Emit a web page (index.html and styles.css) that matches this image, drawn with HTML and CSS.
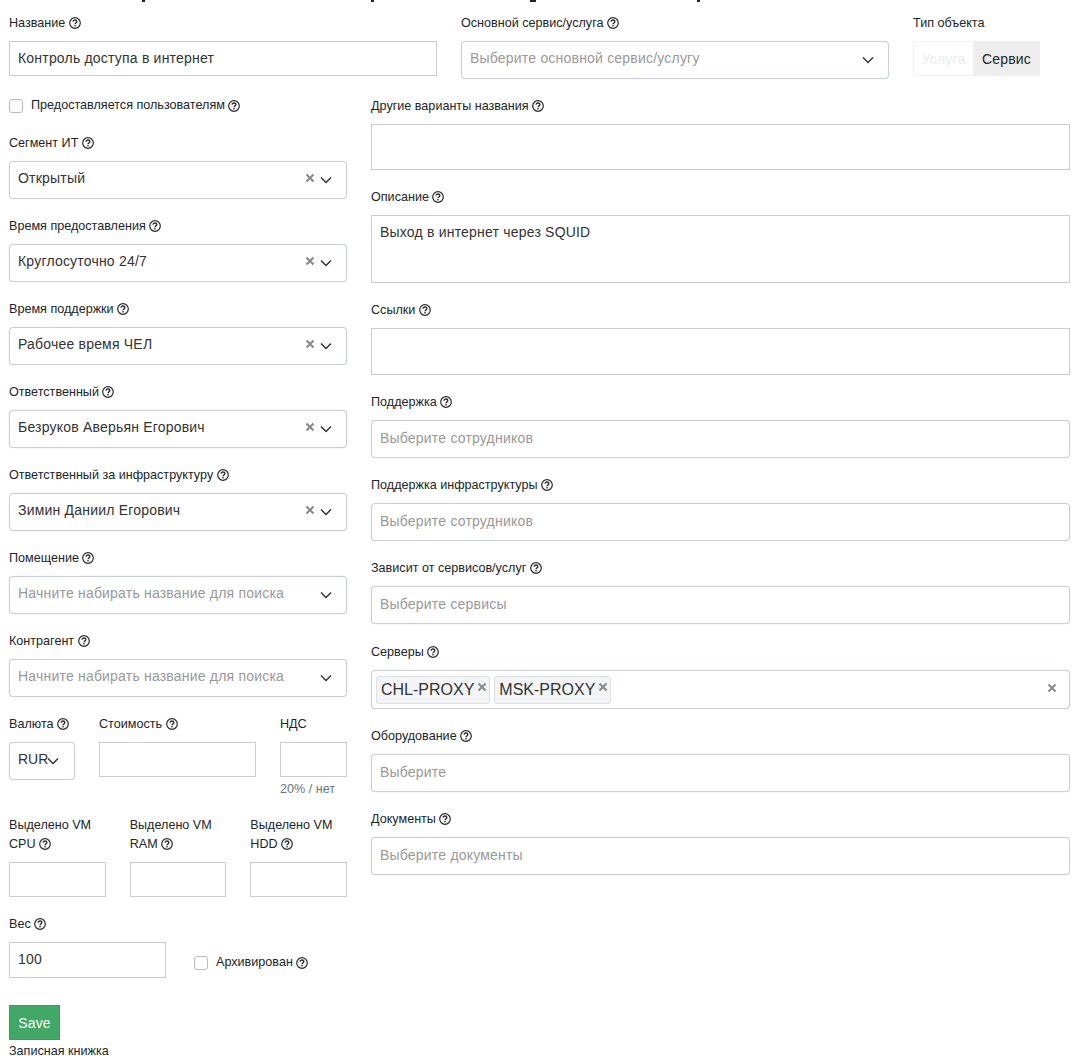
FILE: index.html
```html
<!DOCTYPE html>
<html lang="ru">
<head>
<meta charset="utf-8">
<title>Контроль доступа в интернет</title>
<link rel="stylesheet" href="styles.css">
</head>
<body>
<svg class="sprite" width="0" height="0" aria-hidden="true">
  <symbol id="help" viewBox="0 0 12 12">
    <circle cx="6" cy="6" r="5.3" fill="none" stroke="currentColor" stroke-width="1.2"/>
    <path d="M4.1 4.7c0-1 .8-1.7 1.9-1.7s1.9.7 1.9 1.6c0 1.3-1.9 1.3-1.9 2.6" fill="none" stroke="currentColor" stroke-width="1.3"/>
    <rect x="5.3" y="8" width="1.4" height="1.4" fill="currentColor"/>
  </symbol>
  <symbol id="chev" viewBox="0 0 12 8">
    <path d="M1 1.5l5 5 5-5" fill="none" stroke="currentColor" stroke-width="1.5"/>
  </symbol>
  <symbol id="clear" viewBox="0 0 10 10">
    <path d="M1.5 1.5l7 7M8.5 1.5l-7 7" fill="none" stroke="currentColor" stroke-width="2"/>
  </symbol>
</svg>

<form class="page">
  <div class="clipped-title"><i class="m1"></i><i class="m2"></i><i class="m3"></i><i class="m4"></i></div>

  <div class="top-row">
    <div>
      <label class="lbl">Название <svg class="q"><use href="#help"/></svg></label>
      <input class="inp" type="text" value="Контроль доступа в интернет">
    </div>
    <div>
      <label class="lbl">Основной сервис/услуга <svg class="q"><use href="#help"/></svg></label>
      <div class="sel"><span class="ph">Выберите основной сервис/услугу</span><svg class="chev"><use href="#chev"/></svg></div>
    </div>
    <div>
      <label class="lbl">Тип объекта</label>
      <div class="toggle"><span class="off">Услуга</span><span class="on">Сервис</span></div>
    </div>
  </div>

  <div class="columns">
    <div class="col-left">
      <label class="check check-top"><span class="box"></span>Предоставляется пользователям <svg class="q"><use href="#help"/></svg></label>

      <div class="field">
        <label class="lbl">Сегмент ИТ <svg class="q"><use href="#help"/></svg></label>
        <div class="sel"><span class="val">Открытый</span><svg class="clear"><use href="#clear"/></svg><svg class="chev"><use href="#chev"/></svg></div>
      </div>
      <div class="field">
        <label class="lbl">Время предоставления <svg class="q"><use href="#help"/></svg></label>
        <div class="sel"><span class="val">Круглосуточно 24/7</span><svg class="clear"><use href="#clear"/></svg><svg class="chev"><use href="#chev"/></svg></div>
      </div>
      <div class="field">
        <label class="lbl">Время поддержки <svg class="q"><use href="#help"/></svg></label>
        <div class="sel"><span class="val">Рабочее время ЧЕЛ</span><svg class="clear"><use href="#clear"/></svg><svg class="chev"><use href="#chev"/></svg></div>
      </div>
      <div class="field">
        <label class="lbl">Ответственный <svg class="q"><use href="#help"/></svg></label>
        <div class="sel"><span class="val">Безруков Аверьян Егорович</span><svg class="clear"><use href="#clear"/></svg><svg class="chev"><use href="#chev"/></svg></div>
      </div>
      <div class="field">
        <label class="lbl">Ответственный за инфраструктуру <svg class="q"><use href="#help"/></svg></label>
        <div class="sel"><span class="val">Зимин Даниил Егорович</span><svg class="clear"><use href="#clear"/></svg><svg class="chev"><use href="#chev"/></svg></div>
      </div>
      <div class="field">
        <label class="lbl">Помещение <svg class="q"><use href="#help"/></svg></label>
        <div class="sel"><span class="ph">Начните набирать название для поиска</span><svg class="chev"><use href="#chev"/></svg></div>
      </div>
      <div class="field">
        <label class="lbl">Контрагент <svg class="q"><use href="#help"/></svg></label>
        <div class="sel"><span class="ph">Начните набирать название для поиска</span><svg class="chev"><use href="#chev"/></svg></div>
      </div>

      <div class="field price-row">
        <div>
          <label class="lbl">Валюта <svg class="q"><use href="#help"/></svg></label>
          <div class="sel sel-currency"><span class="val">RUR</span><svg class="chev"><use href="#chev"/></svg></div>
        </div>
        <div>
          <label class="lbl">Стоимость <svg class="q"><use href="#help"/></svg></label>
          <input class="inp" type="text">
        </div>
        <div>
          <label class="lbl">НДС</label>
          <input class="inp" type="text">
          <div class="hint">20% / нет</div>
        </div>
      </div>

      <div class="vm-row">
        <div>
          <label class="lbl">Выделено VM CPU <svg class="q"><use href="#help"/></svg></label>
          <input class="inp" type="text">
        </div>
        <div>
          <label class="lbl">Выделено VM RAM <svg class="q"><use href="#help"/></svg></label>
          <input class="inp" type="text">
        </div>
        <div>
          <label class="lbl">Выделено VM HDD <svg class="q"><use href="#help"/></svg></label>
          <input class="inp" type="text">
        </div>
      </div>

      <div class="field weight-row">
        <div class="weight">
          <label class="lbl">Вес <svg class="q"><use href="#help"/></svg></label>
          <input class="inp inp-36" type="text" value="100">
        </div>
        <label class="check check-archive"><span class="box"></span>Архивирован <svg class="q"><use href="#help"/></svg></label>
      </div>
    </div>

    <div class="col-right">
      <div>
        <label class="lbl">Другие варианты названия <svg class="q"><use href="#help"/></svg></label>
        <textarea class="inp area-46"></textarea>
      </div>
      <div class="field">
        <label class="lbl">Описание <svg class="q"><use href="#help"/></svg></label>
        <textarea class="inp area-68">Выход в интернет через SQUID</textarea>
      </div>
      <div class="field">
        <label class="lbl">Ссылки <svg class="q"><use href="#help"/></svg></label>
        <textarea class="inp area-47"></textarea>
      </div>
      <div class="field">
        <label class="lbl">Поддержка <svg class="q"><use href="#help"/></svg></label>
        <div class="sel sel-plain"><span class="ph">Выберите сотрудников</span></div>
      </div>
      <div class="field">
        <label class="lbl">Поддержка инфраструктуры <svg class="q"><use href="#help"/></svg></label>
        <div class="sel sel-plain"><span class="ph">Выберите сотрудников</span></div>
      </div>
      <div class="field">
        <label class="lbl">Зависит от сервисов/услуг <svg class="q"><use href="#help"/></svg></label>
        <div class="sel sel-plain"><span class="ph">Выберите сервисы</span></div>
      </div>
      <div class="field field-servers">
        <label class="lbl">Серверы <svg class="q"><use href="#help"/></svg></label>
        <div class="sel sel-multi">
          <span class="tag">CHL-PROXY<svg class="tag-x"><use href="#clear"/></svg></span>
          <span class="tag">MSK-PROXY<svg class="tag-x"><use href="#clear"/></svg></span>
          <svg class="clear clear-end"><use href="#clear"/></svg>
        </div>
      </div>
      <div class="field">
        <label class="lbl">Оборудование <svg class="q"><use href="#help"/></svg></label>
        <div class="sel sel-plain"><span class="ph">Выберите</span></div>
      </div>
      <div class="field">
        <label class="lbl">Документы <svg class="q"><use href="#help"/></svg></label>
        <div class="sel sel-plain"><span class="ph">Выберите документы</span></div>
      </div>
    </div>
  </div>

  <div class="actions">
    <button class="save" type="button">Save</button>
    <div class="lbl notebook">Записная книжка</div>
  </div>
</form>
</body>
</html>
```

FILE: styles.css
```css
* { box-sizing: border-box; }
html, body { margin: 0; padding: 0; background: #fff; }
body {
  font-family: "Liberation Sans", Arial, sans-serif;
  font-size: 14px;
  color: #212529;
  height: 1062px;
  overflow: hidden;
}
.sprite { position: absolute; }

.page { width: 1080px; padding: 0 10px 0 9px; }

.clipped-title { display: flex; height: 13px; align-items: flex-start; }
.clipped-title i { display: block; width: 3px; height: 2px; background: #222; }
.clipped-title .m1 { margin-left: 133px; }
.clipped-title .m2 { margin-left: 226px; }
.clipped-title .m3 { margin-left: 156px; width: 6px; }
.clipped-title .m4 { margin-left: 161px; }

.top-row { display: grid; grid-template-columns: 428px 428px 127px; column-gap: 24px; margin-bottom: 17px; }
.columns { display: grid; grid-template-columns: 338px 699px; column-gap: 24px; align-items: start; }

.lbl { display: block; font-size: 12.6px; line-height: 19px; padding-top: 1px; margin-bottom: 8px; color: #212529; }
.q { display: inline-block; width: 12px; height: 12px; vertical-align: -1.5px; color: #2a2a2a; }

.inp {
  display: block;
  width: 100%;
  height: 35px;
  padding: 0 8px 2px;
  border: 1px solid #ccc;
  border-radius: 0;
  font: 14px "Liberation Sans", Arial, sans-serif;
  letter-spacing: .2px;
  color: #333;
  background: #fff;
  outline: none;
}
.inp-36 { height: 36px; }
textarea.inp { padding: 8px; resize: none; line-height: 17px; }
.area-46 { height: 46px; }
.area-68 { height: 68px; }
.area-47 { height: 47px; }

.sel {
  display: flex;
  align-items: center;
  height: 38px;
  padding: 0 14px 4px 8px;
  border: 1px solid #ccd0d5;
  border-radius: 4px;
  background: #fff;
  box-shadow: 0 0 1px rgba(120, 130, 150, .35);
}
.sel .val { flex: 1; color: #333; letter-spacing: .2px; }
.sel .ph { flex: 1; color: #999; letter-spacing: .2px; }
.sel-plain { padding-bottom: 2px; }
.chev { width: 12px; height: 8px; color: #333; flex: none; margin-top: 4px; }
.clear { width: 10px; height: 10px; color: #888; flex: none; margin-right: 5px; }

.sel-currency { padding-right: 14px; }
.sel-currency .val { flex: none; letter-spacing: 0; }
.sel-currency .chev { margin-left: -1px; }

.sel-multi { height: 39px; padding: 0 12px 0 4px; gap: 4px; }
.tag {
  display: flex;
  align-items: center;
  height: 28px;
  padding: 0 2px 0 4px;
  font-size: 16px;
  color: #333;
  background: #f3f4f6;
  border: 1px solid #dcdfe3;
  border-radius: 3px;
}
.tag-x { width: 10px; height: 10px; color: #888; margin: -5px 0 0 3px; }
.clear-end { margin: -3px 0 0 auto; }

.toggle { display: flex; height: 35px; letter-spacing: .2px; }
.toggle span { display: flex; align-items: center; justify-content: center; }
.off { width: 60px; color: #ececec; border: 1px solid #f1f1f1; border-right: 0; }
.on { width: 67px; background: #eee; color: #212529; }

.check { display: flex; align-items: center; font-size: 12.6px; line-height: 19px; white-space: pre; }
.box {
  width: 14px;
  height: 14px;
  margin-right: 8px;
  border: 1px solid #b8bcc2;
  border-radius: 3px;
  background: #fff;
}
.check-top { margin-bottom: 18px; }

.field { margin-top: 17px; }
.check-top + .field { margin-top: 0; }
.field-servers { margin-top: 18px; }

.price-row { display: grid; grid-template-columns: 66px 157px 67px; column-gap: 24px; }
.hint { margin-top: 3px; font-size: 12.6px; line-height: 19px; color: #6c757d; }

.vm-row { display: grid; grid-template-columns: repeat(3, 1fr); column-gap: 24px; margin-top: 16px; }

.weight-row { display: flex; align-items: flex-start; }
.weight { width: 157px; }
.check-archive { margin: 39px 0 0 28px; }

.actions { margin-top: 27px; width: 338px; }
.save {
  display: block;
  width: 51px;
  height: 35px;
  padding: 0;
  border: 1px solid #3b9e60;
  background: #41a868;
  color: #fff;
  font: 14px "Liberation Sans", Arial, sans-serif;
  letter-spacing: .15px;
}
.notebook { margin: 0; padding-top: 1px; line-height: 20px; }
```
